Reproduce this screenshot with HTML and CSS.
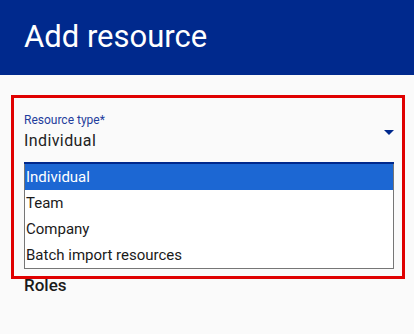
FILE: index.html
```html
<!DOCTYPE html>
<html lang="en">
<head>
  <meta charset="UTF-8">
  <title>Add resource</title>
  <link rel="stylesheet" href="styles.css">
</head>
<body>
  <header class="topbar">
    <h1>Add resource</h1>
  </header>

  <main class="content">
    <div class="highlight">
      <div class="field">
        <label class="field-label">Resource type*</label>
        <div class="field-value">
          <span>Individual</span>
          <svg class="arrow" width="10" height="5" viewBox="0 0 10 5"><path d="M0 0l5 5 5-5z" fill="#00288c"/></svg>
        </div>
      </div>
      <ul class="options">
        <li class="selected">Individual</li>
        <li>Team</li>
        <li>Company</li>
        <li>Batch import resources</li>
      </ul>
    </div>

    <h2 class="section-title">Roles</h2>
  </main>
</body>
</html>
```

FILE: styles.css
```css
* { box-sizing: border-box; }

body {
  margin: 0;
  font-family: Roboto, 'Noto Sans', sans-serif;
  background: #fafafa;
  color: #212121;
}

.topbar {
  height: 75px;
  background: #00298d;
  padding: 0 24px;
  display: flex;
  align-items: center;
}

.topbar h1 {
  margin: 0;
  color: #fff;
  font-size: 31px;
  font-weight: 400;
  line-height: 1;
  padding-bottom: 2px;
}

.content {
  padding: 23px 12px 0 14px;
}

.highlight {
  outline: 3px solid #e00000;
  padding: 14px 8px 7px 10px;
}

.field-label {
  display: block;
  font-size: 12px;
  line-height: 16px;
  color: #1f3d9c;
}

.field-value {
  display: flex;
  justify-content: space-between;
  align-items: flex-start;
  margin-top: 3px;
  padding-bottom: 11px;
  border-bottom: 2px solid #00288c;
  font-size: 16px;
  line-height: 20px;
  letter-spacing: 0.4px;
  color: #222;
}

.arrow {
  margin-top: -1px;
}

.options {
  list-style: none;
  margin: 0;
  padding: 0;
  border: 1px solid #767676;
  border-top: none;
  background: #fff;
  font-size: 15px;
}

.options li {
  height: 26px;
  line-height: 26px;
  padding-left: 1px;
  color: #1a1a1a;
}

.options li.selected {
  background: #1c67d3;
  color: #fff;
}

.section-title {
  margin: 1px 0 0;
  padding-left: 10px;
  font-size: 17px;
  font-weight: 500;
  line-height: 17px;
  color: #1a1a1a;
}
```
